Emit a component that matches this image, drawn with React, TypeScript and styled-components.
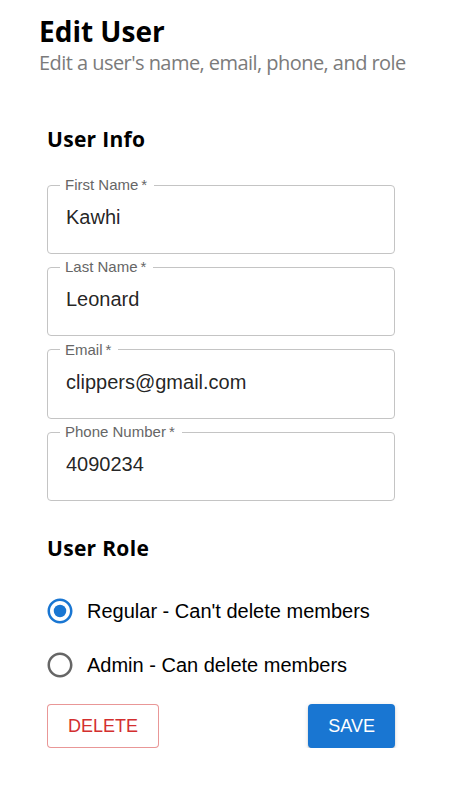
import React from "react";
import styled, { createGlobalStyle } from "styled-components";

const Global = createGlobalStyle`
  html, body { margin: 0; padding: 0; background: #fff; }
  body { font-family: "Liberation Sans", Arial, sans-serif; }
  * { box-sizing: border-box; }
`;

const Page = styled.div`
  padding: 17px 0 0 39px;
  width: 452px;
`;

const Title = styled.h1`
  margin: 0;
  font-family: "Open Sans", "Noto Sans", sans-serif;
  font-weight: 700;
  font-size: 28px;
  line-height: 28px;
  color: #000;
`;

const Subtitle = styled.p`
  margin: 8px 0 0;
  font-family: "Open Sans", "Noto Sans", sans-serif;
  font-size: 20px;
  line-height: 20px;
  letter-spacing: -0.55px;
  color: #7b7b7b;
`;

const Section = styled.section`
  margin-left: 8px;
  width: 348px;
  display: flex;
  flex-direction: column;
`;

const SectionTitle = styled.h2<{ $top: number }>`
  margin: ${(p) => p.$top}px 0 0;
  font-family: "Open Sans", "Noto Sans", sans-serif;
  font-weight: 700;
  font-size: 21px;
  line-height: 21px;
  letter-spacing: 0.3px;
  color: #000;
`;

const Fields = styled.div`
  margin-top: 27px;
  display: flex;
  flex-direction: column;
  gap: 5.4px;
`;

const FieldBox = styled.fieldset`
  margin: 0;
  padding: 0 18px;
  border: 1px solid #c4c4c4;
  border-radius: 4px;
  min-width: 0;
`;

const Legend = styled.legend`
  margin-left: -6px;
  padding: 0 7px 0 5px;
  font-size: 15px;
  line-height: 16px;
  color: #666;
`;

const Input = styled.input`
  display: block;
  width: 100%;
  margin: 12px 0 24px;
  padding: 0;
  border: 0;
  outline: none;
  height: 24px;
  font-family: "Liberation Sans", Arial, sans-serif;
  font-size: 20px;
  line-height: 24px;
  color: rgba(0, 0, 0, 0.87);
  background: transparent;
`;

const RadioGroup = styled.div`
  margin: 31px 0 0 -2px;
  display: flex;
  flex-direction: column;
  gap: 12px;
`;

const RadioRow = styled.label`
  display: flex;
  align-items: center;
  height: 42px;
  gap: 12px;
  font-size: 20px;
  color: #000;
  cursor: pointer;
`;

const RadioIcon = styled.svg<{ $checked: boolean }>`
  width: 30px;
  height: 30px;
  flex: none;
  fill: ${(p) => (p.$checked ? "#1976d2" : "#666")};
`;

const Actions = styled.div`
  margin-top: 18px;
  display: flex;
  justify-content: space-between;
  align-items: center;
`;

const Button = styled.button<{ $variant: "outlined" | "contained" }>`
  height: 44px;
  padding: 0 20px;
  border-radius: 4px;
  font-family: "Liberation Sans", Arial, sans-serif;
  font-size: 18px;
  text-transform: uppercase;
  cursor: pointer;
  ${(p) =>
    p.$variant === "outlined"
      ? `
    background: #fff;
    color: #d32f2f;
    border: 1px solid rgba(211, 47, 47, 0.5);
  `
      : `
    background: #1976d2;
    color: #fff;
    border: 0;
    box-shadow: 0px 3px 1px -2px rgba(0,0,0,0.2), 0px 2px 2px 0px rgba(0,0,0,0.14), 0px 1px 5px 0px rgba(0,0,0,0.12);
  `}
`;

const Radio = ({ checked }: { checked: boolean }) => (
  <RadioIcon $checked={checked} viewBox="0 0 24 24" aria-hidden>
    <path d="M12 2C6.48 2 2 6.48 2 12s4.48 10 10 10 10-4.48 10-10S17.52 2 12 2zm0 18c-4.42 0-8-3.58-8-8s3.58-8 8-8 8 3.58 8 8-3.58 8-8 8z" />
    {checked && <circle cx="12" cy="12" r="5" />}
  </RadioIcon>
);

const fields = [
  { label: "First Name", value: "Kawhi" },
  { label: "Last Name", value: "Leonard" },
  { label: "Email", value: "clippers@gmail.com" },
  { label: "Phone Number", value: "4090234" },
];

export default function App() {
  return (
    <Page>
      <Global />
      <Title>Edit User</Title>
      <Subtitle>Edit a user's name, email, phone, and role</Subtitle>
      <Section>
        <SectionTitle $top={56}>User Info</SectionTitle>
        <Fields>
          {fields.map((f) => (
            <FieldBox key={f.label}>
              <Legend>{f.label}{"\u2009"}*</Legend>
              <Input defaultValue={f.value} />
            </FieldBox>
          ))}
        </Fields>
        <SectionTitle $top={37}>User Role</SectionTitle>
        <RadioGroup>
          <RadioRow>
            <Radio checked />
            Regular - Can't delete members
          </RadioRow>
          <RadioRow>
            <Radio checked={false} />
            Admin - Can delete members
          </RadioRow>
        </RadioGroup>
        <Actions>
          <Button $variant="outlined">Delete</Button>
          <Button $variant="contained">Save</Button>
        </Actions>
      </Section>
    </Page>
  );
}
